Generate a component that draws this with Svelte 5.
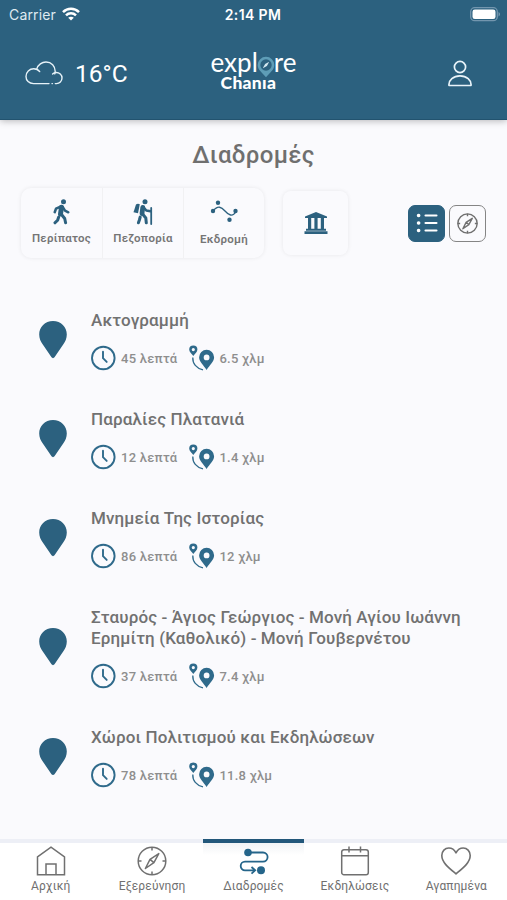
<script lang="ts">
  type Route = { title: string[]; minutes: string; km: string };

  const routes: Route[] = [
    { title: ['Ακτογραμμή'], minutes: '45', km: '6.5' },
    { title: ['Παραλίες Πλατανιά'], minutes: '12', km: '1.4' },
    { title: ['Μνημεία Της Ιστορίας'], minutes: '86', km: '12' },
    { title: ['Σταυρός - Άγιος Γεώργιος - Μονή Αγίου Ιωάννη', 'Ερημίτη (Καθολικό) - Μονή Γουβερνέτου'], minutes: '37', km: '7.4' },
    { title: ['Χώροι Πολιτισμού και Εκδηλώσεων'], minutes: '78', km: '11.8' },
  ];

  const filters = [
    { id: 'walk', label: 'Περίπατος' },
    { id: 'hike', label: 'Πεζοπορία' },
    { id: 'trip', label: 'Εκδρομή' },
  ];

  const tabs = [
    { id: 'home', label: 'Αρχική' },
    { id: 'explore', label: 'Εξερεύνηση' },
    { id: 'routes', label: 'Διαδρομές' },
    { id: 'events', label: 'Εκδηλώσεις' },
    { id: 'favorites', label: 'Αγαπημένα' },
  ];

  let activeTab = $state('routes');
  let view = $state('list');
</script>

{#snippet compass(size: number, sw: number)}
  <svg width={size} height={size} viewBox="0 0 30 30" fill="none" stroke="currentColor" stroke-width={sw} stroke-linejoin="round">
    <circle cx="15" cy="15" r="13.8" />
    <path d="M15 1v3.5M15 25.5V29M1 15h3.5M25.5 15H29" />
    <path d="M21.8 7.6 L16.9 16.6 L8.4 22.5 L13 13.4 Z M13 13.4 L16.9 16.6" />
  </svg>
{/snippet}

<div class="screen">
  <header>
    <div class="status">
      <div class="carrier">
        <span>Carrier</span>
        <svg width="18" height="14" viewBox="0 0 18 14" fill="none" stroke="#fff" stroke-width="2.5">
          <path d="M1 5.2C5.5.7 12.500.7 17 5.200" />
          <path d="M4 8.400c2.800-2.800 7.200-2.800 10 0" />
          <path d="M9 13.500 6.200 10.800c1.500-1.500 4.100-1.500 5.600 0Z" fill="#fff" stroke="none" />
        </svg>
      </div>
      <span class="time">2:14 PM</span>
      <svg class="battery" width="31" height="15" viewBox="0 0 31 15">
        <rect x=".7" y=".7" width="26.600" height="13" rx="4" fill="none" stroke="#7396ae" stroke-width="1.300" />
        <rect x="2.500" y="2.400" width="23" height="9.600" rx="2.300" fill="#fff" />
        <path d="M28.500 5c2 .8 2 3.700 0 4.500Z" fill="#7396ae" />
      </svg>
    </div>
    <div class="top">
      <div class="weather">
        <svg width="38" height="24" viewBox="0 0 38 24" fill="none" stroke="#e6f2f8" stroke-width="1.400" stroke-linecap="round">
          <path d="M24 22.600H8.500C4 22.600 1 19.600 1 15.400 1 11 4.500 7.800 8.700 7.800c2 0 4.600 1 6 2.800" />
          <path d="M11.800 7.900C13 3.700 17 1 21 1c5.500 0 9.200 4 9.200 9.300 0 .9-.2 1.800-.5 2.600" />
          <path d="M27.600 12.900c1-1 2.200-1.400 3.600-1.400 3.200 0 5.800 2.300 5.800 5.500s-2.500 5.600-5.500 5.600h-1.200M27 22.600h.4" />
        </svg>
        <span>16°C</span>
      </div>
      <div class="logo">
        <div class="word">
          <span>expl</span>
          <svg width="18" height="22" viewBox="0 0 18 22">
            <path d="M9 .7a8.300 8.300 0 0 0-8.300 8.300c0 5 4.800 7.800 8.300 12.300 3.500-4.500 8.300-7.300 8.300-12.300A8.300 8.300 0 0 0 9 .7Z" fill="#5e9db7" />
            <circle cx="9" cy="9" r="5.700" fill="#2c617f" />
            <path d="m12.200 5.800-2.300 4.100-4.100 2.300 2.300-4.100Z" fill="#d5e9f2" />
          </svg>
          <span>re</span>
        </div>
        <div class="city">Chanıa</div>
      </div>
      <svg class="user" width="24" height="27" viewBox="0 0 24 27" fill="none" stroke="#e9f4fa" stroke-width="1.700">
        <circle cx="12" cy="7" r="5.600" />
        <path d="M1 25.500c-.6-5.500 4.500-9.700 11-9.700s11.600 4.200 11 9.700Z" stroke-linejoin="round" />
      </svg>
    </div>
  </header>

  <main>
    <h1>Διαδρομές</h1>

    <div class="toolbar">
      <div class="filters">
        {#each filters as filter}
          <button class="filter {filter.id}">
            {#if filter.id === 'walk'}
              <svg width="17" height="26" viewBox="0 0 17 26" fill="none" stroke="currentColor" stroke-linecap="round" stroke-linejoin="round">
                <circle cx="10.500" cy="2.700" r="2.500" fill="currentColor" stroke="none" />
                <path d="M8.500 8.300 7.500 15" stroke-width="5" />
                <path d="M8 7.500 3 9.700 1.700 13.200M10 8.300l2 3.300 3.300 1.700" stroke-width="2.500" />
                <path d="m8.500 15.500 3.200 4 .9 4.300M5.600 18.200l-1 3L2 23.800" stroke-width="3" />
              </svg>
            {:else if filter.id === 'hike'}
              <svg width="20" height="26" viewBox="0 0 20 26" fill="none" stroke="currentColor" stroke-linecap="round" stroke-linejoin="round">
                <circle cx="12" cy="2.700" r="2.500" fill="currentColor" stroke="none" />
                <path d="M3 5.500c1-1 3-.8 3.800-.2L5 14.200.5 13.200Z" fill="currentColor" stroke="none" />
                <path d="M9.800 8.300 9 14.500" stroke-width="4.800" />
                <path d="m11 8.800 2.300 2.700 4.200.8" stroke-width="2.500" />
                <path d="m9.800 15.300 3 3.700.5 4.800M7.200 18l-.8 3-1 2.800" stroke-width="3" />
                <path d="M18.200 9v16" stroke-width="1.800" />
              </svg>
            {:else}
              <svg width="28" height="24" viewBox="0 0 28 24" fill="none" stroke="currentColor" stroke-width="1.300">
                <path d="M3 12C8 6 11.500 8 15 12s7.500 6.500 11 .5" />
                <g fill="currentColor" stroke="none">
                  <circle cx="3" cy="12" r="2.200" />
                  <circle cx="8" cy="3.700" r="2.200" />
                  <circle cx="19.500" cy="20.700" r="2.200" />
                  <circle cx="25.500" cy="12" r="2.200" />
                </g>
              </svg>
            {/if}
            <span>{filter.label}</span>
          </button>
        {/each}
      </div>
      <button class="museum" aria-label="museum">
        <svg width="24" height="22" viewBox="0 0 24 22" fill="currentColor">
          <path d="M12 0 23 4.400V6H1V4.400ZM4 6h3.200v11H4zM10.400 6h3.200v11h-3.200zM16.800 6H20v11h-3.200zM2 16.800h20v2H2zM.5 19.300h23V22H.5z" />
        </svg>
      </button>
      <div class="views">
        <button class="view" class:on={view === 'list'} onclick={() => (view = 'list')} aria-label="list">
          <svg width="22" height="20" viewBox="0 0 22 20" stroke="currentColor" stroke-linecap="round">
            <path d="M9.500 2.500h11M9.500 10h11M9.500 17.500h11" stroke-width="2.100" />
            <path d="M2.500 2.500h.2M2.500 10h.2M2.500 17.500h.2" stroke-width="3.500" />
          </svg>
        </button>
        <button class="view" class:on={view === 'map'} onclick={() => (view = 'map')} aria-label="map">
          {@render compass(21, 2)}
        </button>
      </div>
    </div>

    <ul>
      {#each routes as route}
        <li>
          <svg class="pin" width="28" height="38" viewBox="0 0 28 38">
            <path d="M14 0C6 0 .2 6 .2 13.500c0 4 1.500 7 3.600 10L12.500 36.300c.8 1.100 2.200 1.100 3 0L24.200 23.500c2.100-3 3.600-6 3.600-10C27.800 6 22 0 14 0Z" fill="currentColor" />
          </svg>
          <div class="info">
            <h2>{#each route.title as line}<span>{line}</span>{/each}</h2>
            <div class="meta">
              <svg class="clock" width="25" height="26" viewBox="0 0 25 26" fill="none" stroke="currentColor" stroke-width="1.900" stroke-linecap="round">
                <circle cx="12.300" cy="13" r="11.300" />
                <path d="M12 6.800v6.400l3.700 3.700" />
              </svg>
              <span class="mins">{route.minutes} λεπτά</span>
              <svg class="dist" width="26" height="26" viewBox="0 0 26 26">
                <path d="M4.300 0.500A4.100 4.100 0 0 0 .2 4.600C.2 7.100 2.500 8.500 4.300 11 6.100 8.500 8.400 7.100 8.400 4.600A4.100 4.100 0 0 0 4.300.5Zm0 2.500a1.600 1.600 0 1 1 0 3.200 1.600 1.600 0 0 1 0-3.200Z" fill="currentColor" fill-rule="evenodd" />
                <path d="M3.800 12.500c-.3 6 3.500 11 10.200 12.300" fill="none" stroke="currentColor" stroke-width="1.300" />
                <path d="M17.600 4.800a7.500 7.500 0 0 0-7.500 7.500c0 4.700 4.600 8 7.500 12.700 2.900-4.700 7.500-8 7.500-12.700a7.500 7.500 0 0 0-7.500-7.500Zm0 4.700a2.900 2.900 0 1 1 0 5.800 2.900 2.900 0 0 1 0-5.800Z" fill="currentColor" fill-rule="evenodd" />
              </svg>
              <span>{route.km} χλμ</span>
            </div>
          </div>
        </li>
      {/each}
    </ul>
  </main>

  <nav>
    {#each tabs as tab}
      <button class="tab" class:active={activeTab === tab.id} onclick={() => (activeTab = tab.id)}>
        {#if tab.id === 'home'}
          <svg width="30" height="30" viewBox="0 0 30 30" fill="none" stroke="currentColor" stroke-width="1.500">
            <path d="M1.500 10.800 15 1.200l13.500 9.600v18h-27ZM10 28.800V18h10v10.800" />
          </svg>
        {:else if tab.id === 'explore'}
          {@render compass(30, 1.5)}
        {:else if tab.id === 'routes'}
          <svg width="32" height="30" viewBox="0 0 32 30" fill="none" stroke="currentColor" stroke-width="1.800">
            <path d="M10 6.500h15a4.600 4.600 0 0 1 0 9.200H7a4.300 4.300 0 0 0 0 8.600h10M13.500 21l3.700 3.300-3.700 3.300" />
            <circle cx="10" cy="6.500" r="3.800" fill="currentColor" stroke="none" />
            <circle cx="23" cy="24.300" r="4" fill="currentColor" stroke="none" />
          </svg>
        {:else if tab.id === 'events'}
          <svg width="30" height="30" viewBox="0 0 30 30" fill="none" stroke="currentColor" stroke-width="1.500">
            <rect x="1.700" y="3.700" width="26.600" height="25" rx="2.300" />
            <path d="M1.700 9.800h26.600M9 .5v6M20.500.5v6" />
          </svg>
        {:else}
          <svg width="30" height="30" viewBox="0 0 30 30" fill="none" stroke="currentColor" stroke-width="1.600">
            <path d="M15 27.800C9 22.800.8 17 .8 9.600.8 5 4 2 7.800 2c3 0 5.600 1.700 7.200 4.800C16.600 3.700 19.200 2 22.200 2c3.800 0 7 3 7 7.600 0 7.400-8.200 13.200-14.200 18.200Z" stroke-linejoin="round" />
          </svg>
        {/if}
        <span>{tab.label}</span>
      </button>
    {/each}
  </nav>
</div>

<style>
  :global(body) {
    background: #fafafd;
  }

  .screen {
    height: 900px;
    display: flex;
    flex-direction: column;
    overflow: hidden;
    background: #fafafd;
    font-family: Roboto, "Noto Sans", sans-serif;
    color: #6f6f6f;
  }

  svg {
    display: block;
    flex: none;
  }

  button {
    border: 0;
    padding: 0;
    background: none;
    font: inherit;
    color: inherit;
  }

  header {
    height: 120px;
    box-sizing: border-box;
    flex: none;
    background: #2c617f;
    border-bottom: 1px solid #22536f;
    box-shadow: 0 1px 7px rgba(0, 0, 0, 0.28);
    color: #fff;
  }

  .status {
    height: 28px;
    display: grid;
    grid-template-columns: 1fr auto 1fr;
    align-items: center;
    padding: 0 6px 0 9px;
    font-family: Inter, sans-serif;
  }

  .carrier {
    display: flex;
    align-items: center;
    gap: 6px;
    font-size: 14px;
    color: #dfeaf1;
    letter-spacing: 0.15px;
  }

  .time {
    font-size: 14px;
    font-weight: 600;
    letter-spacing: 0.4px;
    margin-right: 4px;
  }

  .battery {
    justify-self: end;
  }

  .top {
    display: grid;
    grid-template-columns: 1fr auto 1fr;
    height: 91px;
    padding: 0 35px 0 25px;
  }

  .weather {
    display: flex;
    align-items: center;
    gap: 12px;
    height: 90px;
    font-size: 24.5px;
  }

  .logo {
    padding: 21px 0 0 10px;
    font-family: Lato, sans-serif;
  }

  .word {
    display: flex;
    height: 26px;
    line-height: 26px;
    font-size: 26px;
  }

  .word svg {
    margin: 7px -1px 0 -1px;
  }

  .city {
    padding-left: 10px;
    line-height: 16px;
    font-size: 17.5px;
    font-weight: 900;
    letter-spacing: 0.3px;
  }

  .user {
    justify-self: end;
    margin-top: 32px;
  }

  main {
    flex: 1;
  }

  h1 {
    margin: 20px 0 0;
    text-align: center;
    font-size: 24px;
    line-height: 30px;
    font-weight: 500;
    letter-spacing: 0.35px;
  }

  .toolbar {
    display: flex;
    align-items: center;
    height: 72px;
    margin-top: 17px;
    padding: 0 21px 0 21px;
  }

  .filters {
    display: flex;
    height: 70px;
    border-radius: 10px;
    box-shadow: 0 0 4px rgba(0, 0, 0, 0.08);
  }

  .filter {
    width: 81px;
    box-sizing: border-box;
    display: flex;
    flex-direction: column;
    align-items: center;
    padding-top: 11px;
    color: #2c617f;
  }

  .filter + .filter {
    border-left: 1px solid #f1f1f3;
  }

  .filter span {
    margin-top: 5px;
    font-size: 11.5px;
    line-height: 16px;
    font-weight: 600;
    letter-spacing: 0.25px;
    color: #757575;
  }

  .filter.trip span {
    margin-top: 8px;
  }

  .museum {
    width: 65px;
    height: 64px;
    margin-left: 19px;
    display: grid;
    place-items: center;
    border-radius: 8px;
    box-shadow: 0 0 4px rgba(0, 0, 0, 0.08);
    color: #2c617f;
  }

  .views {
    margin-left: auto;
    display: flex;
    gap: 4px;
  }

  .view {
    box-sizing: border-box;
    width: 37px;
    height: 37px;
    display: grid;
    place-items: center;
    border: 1.5px solid #858585;
    border-radius: 7px;
  }

  .view.on {
    background: #2c617f;
    border-color: #2c617f;
    color: #fff;
  }

  ul {
    list-style: none;
    margin: 51px 0 0;
    padding: 0 0 0 39px;
  }

  li {
    display: flex;
    align-items: center;
    gap: 24px;
    margin-bottom: 38px;
  }

  .pin {
    color: #2c617f;
    padding-bottom: 2px;
  }

  h2 {
    margin: 0 0 14px;
    font-size: 17px;
    line-height: 21px;
    font-weight: 500;
    letter-spacing: 0.12px;
    color: #717171;
  }

  h2 span {
    display: block;
    white-space: nowrap;
  }

  .meta {
    display: flex;
    align-items: center;
    height: 26px;
    font-size: 13px;
    font-weight: 500;
    letter-spacing: 0.25px;
    color: #8e8e8e;
  }

  .meta svg {
    color: #2f6a8b;
  }

  .mins {
    margin: 0 12px 0 5px;
  }

  .dist {
    margin-right: 4px;
  }

  nav {
    flex: none;
    display: flex;
    height: 61px;
    background: #fff;
  }

  .tab {
    flex: 1 1 0;
    display: flex;
    flex-direction: column;
    align-items: center;
    border-top: 4px solid #edeff6;
    padding-top: 3px;
    color: #707070;
  }

  .tab span {
    margin-top: 3px;
    font-size: 12px;
    line-height: 15px;
    letter-spacing: 0.15px;
    white-space: nowrap;
  }

  .tab.active {
    border-color: #22577a;
    background: linear-gradient(#f1f3f5, #fff 12px);
  }

  .tab.active svg {
    color: #25658a;
  }
</style>
